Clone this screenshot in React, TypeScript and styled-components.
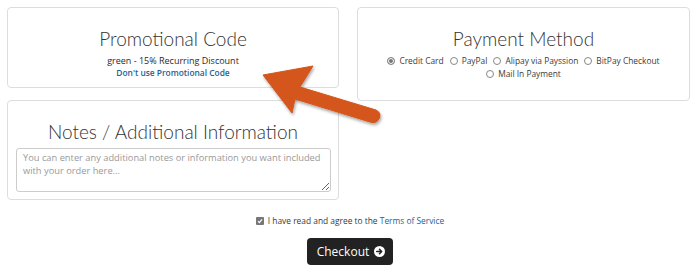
import React from "react";
import styled, { createGlobalStyle } from "styled-components";

const GlobalStyle = createGlobalStyle`
    html, body {
        margin: 0;
        padding: 0;
        background: #ffffff;
        font-family: "Open Sans", "Liberation Sans", sans-serif;
        color: #333333;
    }
`;

const Page = styled.div`
    position: relative;
    width: 700px;
    height: 270px;
    overflow: hidden;
    padding: 7px 0 0 7px;
    box-sizing: border-box;
`;

const Columns = styled.div`
    display: grid;
    grid-template-columns: 332px 333px;
    column-gap: 18px;
    align-items: start;
`;

const Stack = styled.div`
    display: flex;
    flex-direction: column;
    gap: 12px;
`;

const Panel = styled.div<{ $height: number }>`
    box-sizing: border-box;
    height: ${(p) => p.$height}px;
    border: 1px solid #dddddd;
    border-radius: 4px;
    padding: 19px 8px 0;
    text-align: center;
`;

const Title = styled.h2`
    margin: 0 0 5px;
    font-family: "Lato", "Open Sans", sans-serif;
    font-weight: 300;
    font-size: 19px;
    line-height: 23px;
    color: #333333;
`;

const Line = styled.div<{ $strong?: boolean }>`
    font-size: ${(p) => (p.$strong ? "8.4px" : "9px")};
    line-height: 11.5px;
    font-weight: ${(p) => (p.$strong ? 600 : 400)};
    color: #2a2a2a;
`;

const PlainLink = styled.a<{ $strong?: boolean }>`
    color: #1d6196;
    font-weight: ${(p) => (p.$strong ? 600 : 400)};
    text-decoration: none;
`;

const RadioRow = styled.div`
    display: flex;
    justify-content: center;
    flex-wrap: wrap;
    gap: 1px 6px;
    margin-top: 2px;
    font-size: 8.4px;
    line-height: 12px;
`;

const RadioLabel = styled.label`
    display: inline-flex;
    align-items: center;
    gap: 4px;
    color: #3a3a3a;
`;

const RadioDot = styled.span<{ $on?: boolean }>`
    box-sizing: border-box;
    width: 8px;
    height: 8px;
    border-radius: 50%;
    border: 1px solid #888888;
    background: ${(p) => (p.$on ? "#777777" : "#ffffff")};
    box-shadow: ${(p) => (p.$on ? "inset 0 0 0 1px #ffffff" : "none")};
`;

const NotesArea = styled.textarea`
    display: block;
    box-sizing: border-box;
    width: 315px;
    height: 44px;
    margin: 5px 0 0;
    padding: 3px 6px;
    border: 1px solid #cccccc;
    border-radius: 3px;
    font-family: "Open Sans", "Liberation Sans", sans-serif;
    font-size: 9.3px;
    line-height: 12.5px;
    color: #555555;
    resize: vertical;
    &::placeholder {
        color: #999999;
    }
`;

const Footer = styled.div`
    display: flex;
    flex-direction: column;
    align-items: center;
    margin: 15px 0 0 -7px;
    gap: 11px;
`;

const AgreeLine = styled.label`
    display: flex;
    align-items: center;
    gap: 4px;
    font-size: 8.4px;
    line-height: 12px;
    color: #3a3a3a;
`;

const Tick = styled.span`
    display: inline-flex;
    align-items: center;
    justify-content: center;
    width: 8px;
    height: 8px;
    border-radius: 1px;
    background: #777777;
`;

const CheckoutButton = styled.button`
    display: inline-flex;
    align-items: center;
    gap: 5px;
    height: 27px;
    padding: 0 8px 0 10px;
    border: none;
    border-radius: 4px;
    background: #222222;
    color: #ffffff;
    font-family: "Open Sans", "Liberation Sans", sans-serif;
    font-size: 12px;
`;

const ArrowOverlay = styled.svg`
    position: absolute;
    left: 0;
    top: 0;
    pointer-events: none;
`;

const methods = ["Credit Card", "PayPal", "Alipay via Payssion", "BitPay Checkout", "Mail In Payment"];

function App() {
    return (
        <Page>
            <GlobalStyle />
            <Columns>
                <Stack>
                    <Panel $height={81}>
                        <Title>Promotional Code</Title>
                        <Line>green - 15% Recurring Discount</Line>
                        <Line $strong>
                            <PlainLink href="#" $strong>Don't use Promotional Code</PlainLink>
                        </Line>
                    </Panel>
                    <Panel $height={100}>
                        <Title>Notes / Additional Information</Title>
                        <NotesArea placeholder="You can enter any additional notes or information you want included with your order here..." />
                    </Panel>
                </Stack>
                <Panel $height={94}>
                    <Title>Payment Method</Title>
                    <RadioRow>
                        {methods.map((m, i) => (
                            <RadioLabel key={m}>
                                <RadioDot $on={i === 0} />
                                {m}
                            </RadioLabel>
                        ))}
                    </RadioRow>
                </Panel>
            </Columns>
            <Footer>
                <AgreeLine>
                    <Tick>
                        <svg width="6" height="6" viewBox="0 0 6 6">
                            <path d="M1 3.2 L2.4 4.6 L5 1.4" stroke="#fff" strokeWidth="1.2" fill="none" />
                        </svg>
                    </Tick>
                    <span>
                        I have read and agree to the <PlainLink href="#">Terms of Service</PlainLink>
                    </span>
                </AgreeLine>
                <CheckoutButton>
                    Checkout
                    <svg width="11" height="11" viewBox="0 0 12 12">
                        <circle cx="6" cy="6" r="6" fill="#ffffff" />
                        <path d="M3 6 H8.2 M6 3.6 L8.4 6 L6 8.4" stroke="#222" strokeWidth="1.7" fill="none" strokeLinecap="round" strokeLinejoin="round" />
                    </svg>
                </CheckoutButton>
            </Footer>
            <ArrowOverlay width="700" height="270" viewBox="0 0 700 270">
                <defs>
                    <filter id="shade" x="-20%" y="-20%" width="140%" height="140%">
                        <feDropShadow dx="1" dy="2" stdDeviation="1.5" floodColor="#000" floodOpacity="0.35" />
                    </filter>
                </defs>
                <path
                    d="M263 75 L313 66 L300 87 L376 110 Q382 113 379 119 Q376 124 370 122 L295 99 L292 113 Z"
                    fill="#d4561a"
                    stroke="#d4561a"
                    strokeWidth="1"
                    strokeLinejoin="round"
                    filter="url(#shade)"
                />
            </ArrowOverlay>
        </Page>
    );
}

export default App;
